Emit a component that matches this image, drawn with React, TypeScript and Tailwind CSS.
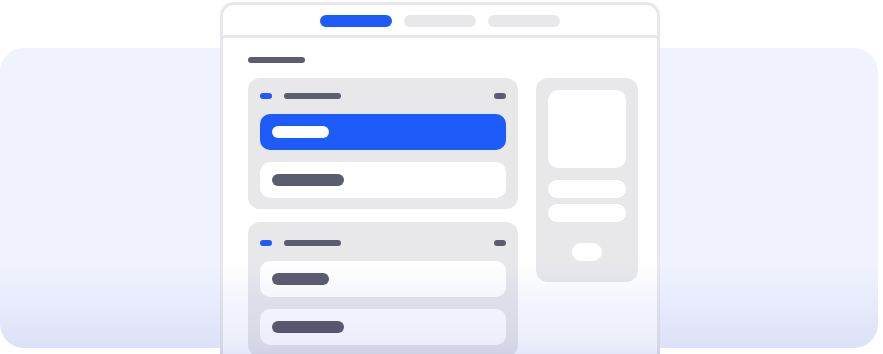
export default function App() {
  return (
    <div className="relative h-[354px] w-[883px] overflow-hidden bg-white">
      {/* Backdrop band */}
      <div className="absolute left-0 top-[48px] h-[300px] w-[878px] rounded-[24px] bg-[linear-gradient(to_bottom,#f0f3fe_72%,#dde1f7)]" />

      {/* Browser frame */}
      <div className="relative ml-[220px] mt-[2px] h-[352px] w-[440px] overflow-hidden rounded-t-[14px] border-[3px] border-b-0 border-[#e8e8ec] bg-white">
        <div className="flex items-center justify-center gap-3 border-b-[3px] border-[#e8e8ec] pt-[10px] pb-[8px]">
          <div className="h-3 w-[72px] rounded-full bg-[#1e5bfb]" />
          <div className="h-3 w-[72px] rounded-full bg-[#e8e8eb]" />
          <div className="h-3 w-[72px] rounded-full bg-[#e8e8eb]" />
        </div>

        <div className="pl-[25px] pt-[19px]">
          <div className="h-[6px] w-[57px] rounded-full bg-[#5c5c70]" />

          <div className="mt-[15px] flex items-start gap-[18px]">
            <div className="flex w-[270px] flex-col gap-[13px]">
              {/* Card 1 */}
              <div className="flex flex-col gap-3 rounded-[12px] bg-[#e8e8eb] px-3 pt-3 pb-[11px]">
                <div className="flex h-3 items-center">
                  <div className="h-[6px] w-3 rounded-full bg-[#1e5bfb]" />
                  <div className="ml-3 h-[6px] w-[57px] rounded-full bg-[#5c5c70]" />
                  <div className="ml-auto h-[6px] w-3 rounded-full bg-[#5c5c70]" />
                </div>
                <div className="flex h-9 items-center rounded-[10px] bg-[#1e5bfb] pl-3">
                  <div className="h-3 w-[57px] rounded-full bg-white" />
                </div>
                <div className="flex h-9 items-center rounded-[10px] bg-white pl-3">
                  <div className="h-3 w-[72px] rounded-full bg-[#5c5c70]" />
                </div>
              </div>

              {/* Card 2 */}
              <div className="flex flex-col gap-3 rounded-[12px] bg-[#e8e8eb] px-3 pt-[15px] pb-3">
                <div className="flex h-3 items-center">
                  <div className="h-[6px] w-3 rounded-full bg-[#1e5bfb]" />
                  <div className="ml-3 h-[6px] w-[57px] rounded-full bg-[#5c5c70]" />
                  <div className="ml-auto h-[6px] w-3 rounded-full bg-[#5c5c70]" />
                </div>
                <div className="flex h-9 items-center rounded-[10px] bg-white pl-3">
                  <div className="h-3 w-[57px] rounded-full bg-[#5c5c70]" />
                </div>
                <div className="flex h-9 items-center rounded-[10px] bg-white pl-3">
                  <div className="h-3 w-[72px] rounded-full bg-[#5c5c70]" />
                </div>
              </div>
            </div>

            {/* Side panel */}
            <div className="flex h-[204px] w-[102px] flex-col rounded-[12px] bg-[#e8e8eb] p-3">
              <div className="h-[78px] w-[78px] rounded-[10px] bg-white" />
              <div className="mt-3 h-[18px] w-[78px] rounded-full bg-white" />
              <div className="mt-[6px] h-[18px] w-[78px] rounded-full bg-white" />
              <div className="mx-auto mt-[21px] h-[18px] w-[30px] rounded-full bg-white" />
            </div>
          </div>
        </div>
      </div>

      {/* Bottom tint over the frame */}
      <div className="pointer-events-none absolute bottom-0 left-[220px] h-[92px] w-[440px] mix-blend-multiply bg-[linear-gradient(to_bottom,#ffffff_0%,#f3f4fd_45%,#eceefb_88%,#e4e7f8_100%)]" />
    </div>
  )
}
